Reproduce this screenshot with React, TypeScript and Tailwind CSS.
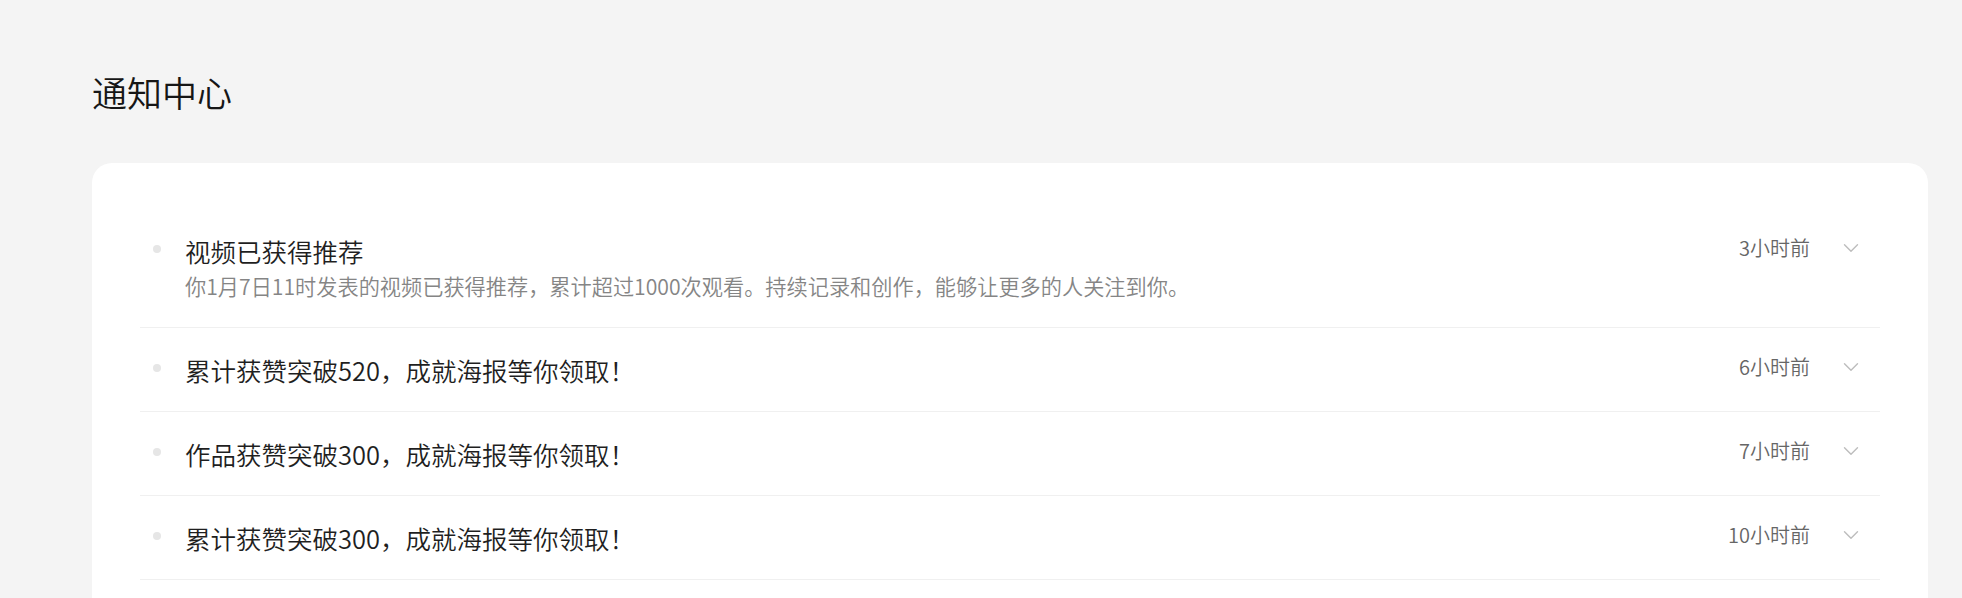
import { ChevronDown } from "lucide-react";

const notices = [
  {
    title: "视频已获得推荐",
    desc: "你1月7日11时发表的视频已获得推荐，累计超过1000次观看。持续记录和创作，能够让更多的人关注到你。",
    time: "3小时前",
  },
  { title: "累计获赞突破520，成就海报等你领取！", time: "6小时前" },
  { title: "作品获赞突破300，成就海报等你领取！", time: "7小时前" },
  { title: "累计获赞突破300，成就海报等你领取！", time: "10小时前" },
];

const NoticeRow = ({ item }: any) => {
  return (
    <div className="flex items-start border-b border-[#f0f0f0] pt-[22px] pb-[21px]">
      {/* dot */}
      <div className="ml-[13px] mt-[14px] h-2 w-2 shrink-0 rounded-full bg-[#e6e6e6]" />
      <div className="ml-6 min-w-0 flex-1">
        <div className="text-[25.5px] font-[350] leading-[40px] text-[#1f1f1f]">{item.title}</div>
        {item.desc && (
          <div className="pb-[5px] text-[21.2px] font-[350] leading-[30px] text-[#858585]">{item.desc}</div>
        )}
      </div>
      <div className="flex h-[34px] items-center">
        <span className="text-[20px] font-[350] text-[#666]">{item.time}</span>
        <ChevronDown className="ml-[28px] mr-[16px] text-[#bdbdbd]" size={26} strokeWidth={1.3} />
      </div>
    </div>
  );
};

export default function App() {
  return (
    <div
      className="min-h-screen bg-[#f4f4f4] pl-[92px] pr-[34px] pt-[68px]"
      style={{ fontFamily: '"Noto Sans CJK SC", "Noto Sans", sans-serif' }}
    >
      <h1 className="text-[35px] font-[350] leading-[48px] text-[#161616]">通知中心</h1>

      <div className="mt-[47px] rounded-[20px] bg-white px-12 pt-[46px] pb-12">
        {notices.map((n, i) => (
          <NoticeRow key={i} item={n} />
        ))}
      </div>
    </div>
  );
}
